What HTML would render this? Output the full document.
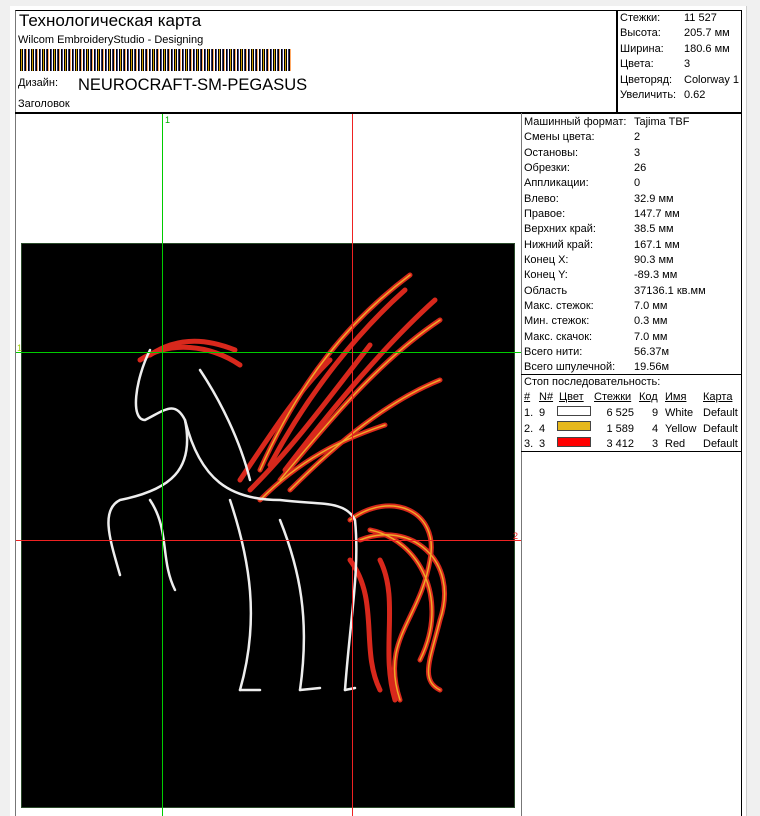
<!DOCTYPE html>
<html><head><meta charset="utf-8"><style>
*{margin:0;padding:0;box-sizing:border-box}
html,body{width:760px;height:816px;overflow:hidden}
body{background:#f0f0f0;position:relative;font-family:"Liberation Sans",sans-serif;color:#000}
.a{position:absolute;white-space:nowrap}
.s{font-size:11px;line-height:13px}
</style></head><body>
<div class="a" style="left:10px;top:6px;width:737px;height:810px;background:#fff;border-right:1px solid #ccc"></div>
<div class="a" style="left:15px;top:10px;width:727px;height:806px;border:1px solid #000;border-bottom:none;border-left-color:#777"></div>
<div class="a" style="left:15px;top:112px;width:727px;height:2px;background:#000"></div>
<div class="a" style="left:616px;top:10px;width:2px;height:103px;background:#000"></div>
<div class="a" style="left:19px;top:10px;font-size:17px;line-height:22px">Технологическая карта</div>
<div class="a s" style="left:18px;top:34px">Wilcom EmbroideryStudio - Designing</div>
<div class="a" style="left:20px;top:49px;width:272px;height:22px;background:repeating-linear-gradient(90deg,#000 0 1px,#c90 1px 2px,#000 2px 3px,#fff 3px 4px,#336 4px 5px,#000 5px 6px,#fa6 6px 7px,#fff 7px 8px,#000 8px 9px,#448 9px 10px,#fff 10px 11px)"></div>
<div class="a" style="left:18px;top:77px;font-size:11px">Дизайн:</div>
<div class="a" style="left:78px;top:76px;font-size:16.5px">NEUROCRAFT-SM-PEGASUS</div>
<div class="a s" style="left:18px;top:98px">Заголовок</div>
<div class="a s" style="left:620px;top:11px;line-height:15.4px">Стежки:<br>Высота:<br>Ширина:<br>Цвета:<br>Цветоряд:<br>Увеличить:</div>
<div class="a s" style="left:684px;top:11px;line-height:15.4px">11 527<br>205.7 мм<br>180.6 мм<br>3<br>Colorway 1<br>0.62</div>
<div class="a" style="left:521px;top:113px;width:1px;height:703px;background:#777"></div>
<div class="a s" style="left:524px;top:115px;line-height:15.33px">Машинный формат:<br>Смены цвета:<br>Остановы:<br>Обрезки:<br>Аппликации:<br>Влево:<br>Правое:<br>Верхних край:<br>Нижний край:<br>Конец X:<br>Конец Y:<br>Область<br>Макс. стежок:<br>Мин. стежок:<br>Макс. скачок:<br>Всего нити:<br>Всего шпулечной:</div>
<div class="a s" style="left:634px;top:115px;line-height:15.33px">Tajima TBF<br>2<br>3<br>26<br>0<br>32.9 мм<br>147.7 мм<br>38.5 мм<br>167.1 мм<br>90.3 мм<br>-89.3 мм<br>37136.1 кв.мм<br>7.0 мм<br>0.3 мм<br>7.0 мм<br>56.37м<br>19.56м</div>
<div class="a" style="left:521px;top:374px;width:221px;height:1px;background:#000"></div>
<div class="a" style="left:521px;top:451px;width:221px;height:1px;background:#000"></div>
<div class="a s" style="left:524px;top:376px">Стоп последовательность:</div>
<div class="a s" style="left:524px;top:391px;text-decoration:underline">#</div>
<div class="a s" style="left:539px;top:391px;text-decoration:underline">N#</div>
<div class="a s" style="left:559px;top:391px;text-decoration:underline">Цвет</div>
<div class="a s" style="left:594px;top:391px;text-decoration:underline">Стежки</div>
<div class="a s" style="left:639px;top:391px;text-decoration:underline">Код</div>
<div class="a s" style="left:665px;top:391px;text-decoration:underline">Имя</div>
<div class="a s" style="left:703px;top:391px;text-decoration:underline">Карта</div>
<div class="a s" style="left:524px;top:406px;line-height:15.5px">1.<br>2.<br>3.</div>
<div class="a s" style="left:539px;top:406px;line-height:15.5px">9<br>4<br>3</div>
<div class="a" style="left:557px;top:406px;width:34px;height:10px;border:1px solid #444;background:#fff"></div>
<div class="a" style="left:557px;top:421px;width:34px;height:10px;border:1px solid #444;background:#e6b81c"></div>
<div class="a" style="left:557px;top:437px;width:34px;height:10px;border:1px solid #444;background:#f00"></div>
<div class="a s" style="left:594px;top:406px;line-height:15.5px;width:40px;text-align:right">6 525<br>1 589<br>3 412</div>
<div class="a s" style="left:652px;top:406px;line-height:15.5px">9<br>4<br>3</div>
<div class="a s" style="left:665px;top:406px;line-height:15.5px">White<br>Yellow<br>Red</div>
<div class="a s" style="left:703px;top:406px;line-height:15.5px">Default<br>Default<br>Default</div>
<div class="a" style="left:21px;top:243px;width:494px;height:565px;background:#000;border:1px solid #2a4a2a"></div>
<svg class="a" style="left:0;top:0" width="760" height="816">
<g fill="none" stroke-linecap="round">
<g stroke="#d8281c" stroke-width="5">
<path d="M260 470 C300 380 350 320 410 275"/><path d="M270 465 C310 390 360 330 405 290"/>
<path d="M280 480 C330 420 380 360 440 320"/><path d="M285 470 C335 405 385 345 435 300"/>
<path d="M290 490 C340 440 390 400 440 380"/><path d="M260 500 C300 460 340 440 385 425"/>
<path d="M250 490 C290 450 320 410 370 345"/><path d="M240 480 C280 420 300 390 330 360"/>
<path d="M350 520 C390 490 440 510 430 560 C420 620 380 640 400 700"/>
<path d="M360 540 C410 520 460 560 440 620 C430 660 420 680 440 690"/>
<path d="M350 560 C380 600 360 650 380 690"/><path d="M370 530 C420 540 450 600 420 660"/>
<path d="M380 560 C400 600 380 650 395 700"/>
<path d="M140 360 C170 340 210 345 240 365"/><path d="M150 355 C180 335 210 340 235 350"/>
</g>
<g stroke="#f0a828" stroke-width="1.5">
<path d="M260 470 C300 380 350 320 410 275"/><path d="M280 480 C330 420 380 360 440 320"/>
<path d="M290 490 C340 440 390 400 440 380"/><path d="M260 500 C300 460 340 440 385 425"/>
<path d="M350 520 C390 490 440 510 430 560 C420 620 380 640 400 700"/>
<path d="M360 540 C410 520 460 560 440 620 C430 660 420 680 440 690"/>
<path d="M370 530 C420 540 450 600 420 660"/>
</g>
<g stroke="#eee" stroke-width="2.5">
<path d="M150 350 C135 380 130 420 145 420 C165 410 175 400 185 420 C195 470 170 490 120 500 C100 510 110 540 120 575"/>
<path d="M185 420 C200 480 230 500 280 500 C320 505 345 500 355 520 C360 570 350 620 345 690"/>
<path d="M230 500 C250 560 260 620 240 690"/><path d="M280 520 C300 570 310 620 300 690"/>
<path d="M150 500 C170 530 160 560 175 590"/><path d="M200 370 C220 400 240 440 250 480"/>
<path d="M240 690 L260 690 M300 690 L320 688 M345 690 L355 688"/>
</g>
</g>
<line x1="162.5" y1="114" x2="162.5" y2="816" stroke="#0c0" stroke-width="1"/>
<line x1="16" y1="352.5" x2="521" y2="352.5" stroke="#0c0" stroke-width="1"/>
<line x1="352.5" y1="114" x2="352.5" y2="816" stroke="#e22" stroke-width="1"/>
<line x1="16" y1="540.5" x2="521" y2="540.5" stroke="#e22" stroke-width="1"/>
<text x="165" y="123" font-size="9" fill="#0a0" font-family="Liberation Sans">1</text>
<text x="17" y="351" font-size="9" fill="#9c0" font-family="Liberation Sans">1</text>
<text x="513" y="539" font-size="9" fill="#e22" font-family="Liberation Sans">2</text>
</svg>
</body></html>
